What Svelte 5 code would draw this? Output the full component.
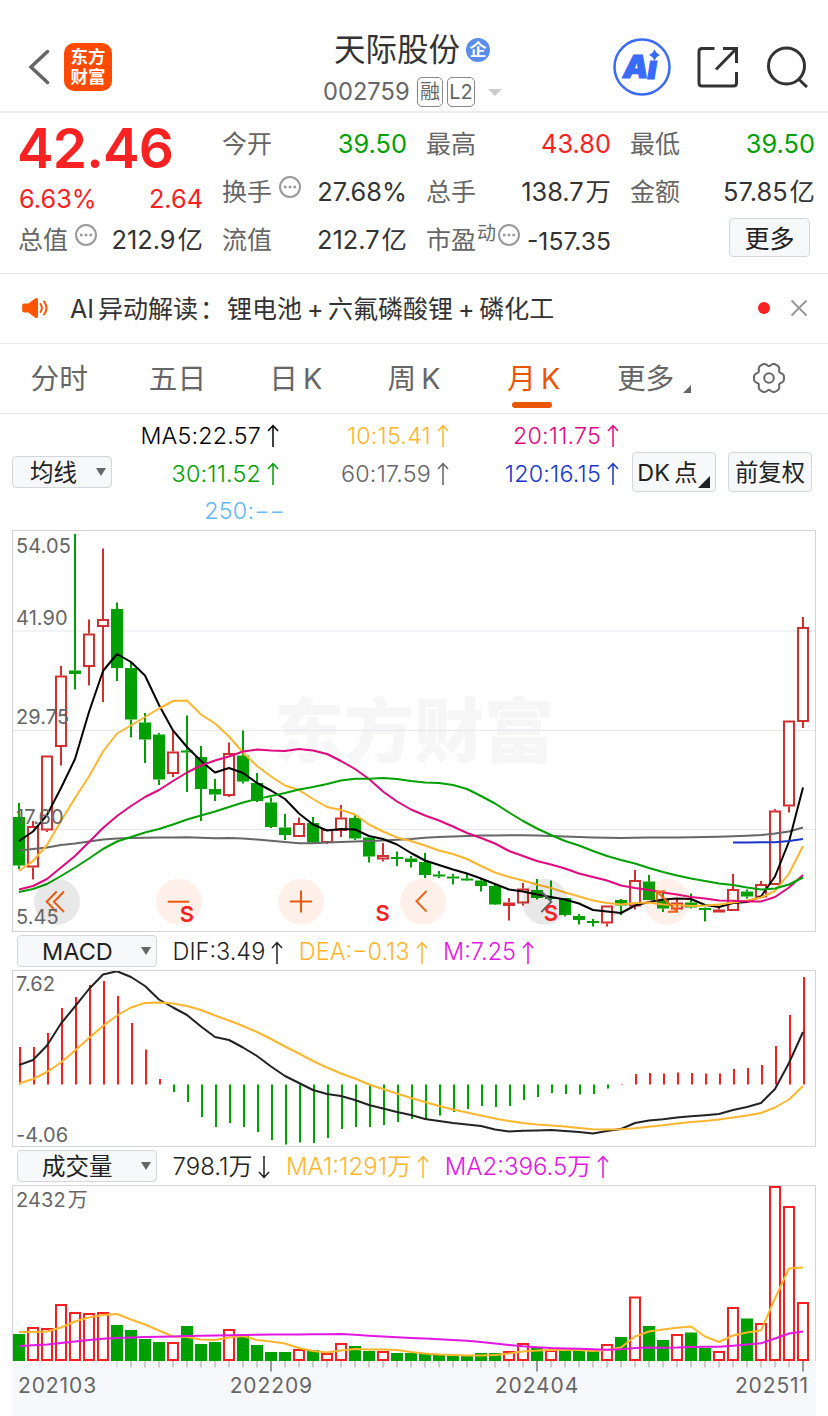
<script lang="ts">
	type Candle = [string, number, number, number, number];

	const step = 14;
	const firstX = 19;

	const tabs = ['分时', '五日', '日 K', '周 K', '月 K', '更多'];
	const activeTab = '月 K';

	const averages = [
		{ text: 'MA5:22.57', color: '#000000', arrow: true },
		{ text: '10:15.41', color: '#ffb62e', arrow: true },
		{ text: '20:11.75', color: '#e0097f', arrow: true },
		{ text: '30:11.52', color: '#00a000', arrow: true },
		{ text: '60:17.59', color: '#666666', arrow: true },
		{ text: '120:16.15', color: '#1a35c8', arrow: true },
		{ text: '250:−−', color: '#63b8f7', arrow: false }
	];

	// direction, high, body top, body bottom, low
	const candles: Candle[] = [
		['g', 803, 817, 865.5, 869],
		['r', 821, 826, 867.5, 879.5],
		['r', 755.5, 755.5, 830.5, 832],
		['r', 666, 675.5, 747, 765.5],
		['g', 534, 670.5, 674, 689.5],
		['r', 619.5, 633.5, 667, 685.5],
		['r', 548.5, 619, 627, 702],
		['g', 602.5, 609, 668, 681],
		['g', 662, 668, 719.5, 737.5],
		['g', 713, 722.5, 739.5, 763],
		['g', 733, 734.5, 779.5, 785],
		['r', 731, 751.5, 774, 777],
		['g', 715.5, 750.5, 752.5, 792],
		['g', 746, 757, 789, 821],
		['g', 779, 789, 794.5, 801],
		['r', 742.5, 753, 796, 797],
		['g', 730.5, 755.5, 781.5, 783.5],
		['g', 773, 783, 801, 802],
		['g', 797.5, 802.5, 827, 828],
		['g', 814, 827.5, 835, 840],
		['r', 817.5, 823, 837, 837],
		['g', 817, 823, 842.5, 843],
		['r', 829, 829, 843, 844],
		['r', 805, 817.5, 831, 837],
		['g', 815, 818, 838.5, 840],
		['g', 837.5, 837.5, 856.5, 862.5],
		['r', 843, 855, 859.5, 861.5],
		['g', 851.5, 857, 859, 866],
		['g', 856, 858.5, 862, 867.5],
		['g', 853, 862, 875, 878],
		['g', 871, 874.5, 876.5, 878],
		['g', 874, 876.5, 878.5, 884.5],
		['g', 873, 878.5, 880.5, 881],
		['g', 879, 880.5, 886, 891.5],
		['g', 885, 886, 904.5, 905],
		['r', 898, 902.5, 906, 920.5],
		['r', 883, 888.5, 903.5, 905.5],
		['g', 879, 890, 898, 899.5],
		['g', 880.5, 897, 899, 900],
		['g', 898, 898, 915, 916.5],
		['g', 914, 916, 920, 924.5],
		['g', 919, 921, 923, 926.5],
		['r', 905.5, 905.5, 923.5, 926.5],
		['g', 899, 900, 905.5, 915],
		['r', 870, 880, 906.5, 909.5],
		['g', 875, 881.5, 900, 900],
		['g', 890.5, 900, 908.5, 912],
		['r', 899, 902.5, 909.5, 910.5],
		['g', 893.5, 902.5, 907.5, 908.5],
		['g', 907.5, 908, 910, 921.5],
		['r', 907.5, 909.5, 912.5, 912.5],
		['r', 874, 889, 911, 911],
		['g', 889.5, 891.5, 896.5, 898.5],
		['r', 881, 884, 897.5, 897.5],
		['r', 809, 810.5, 885, 885],
		['r', 720.5, 720.5, 806.5, 812.5],
		['r', 617, 627, 722, 728]
	];

	const priceLines = [
		{
			color: '#666666',
			start: 0,
			y: [
				850.5, 849, 847.5, 845, 843.5, 841.5, 839.5, 838.5, 838, 837.7, 837.5, 837.5, 837.3, 837.8, 838.3, 838,
				838.5, 839.5, 840.7, 842, 843.2, 843.2, 842.6, 842, 841.5, 841, 840.4, 839.7, 839, 837.7, 837, 836.5, 836,
				835.6, 835.4, 835.3, 835.3, 835.6, 836, 836.5, 837, 837.4, 837.7, 838, 837.7, 837.6, 837.5, 837.4, 837.2,
				837, 836.7, 836.2, 835.7, 835, 833.5, 831.5, 827.5
			]
		},
		{
			color: '#000000',
			start: 0,
			y: [
				841, 831.5, 815, 788, 759, 712, 671, 654, 662, 675.5, 705, 730.5, 747, 761, 772.5, 768, 773, 783, 790.5,
				799, 813.5, 824.5, 830.5, 829, 829.5, 836, 839, 844.5, 853, 860.5, 865, 869.5, 873.5, 878.5, 884, 889.5,
				891.5, 894.5, 897, 899.5, 903.5, 910, 911.5, 913, 905.5, 902, 899.5, 898.5, 899, 905, 907, 903, 902, 896.5,
				876.5, 841.5, 787.5
			]
		},
		{
			color: '#ffb62e',
			start: 0,
			y: [
				871, 861, 845, 821, 798, 776.5, 751.5, 733.5, 725.5, 717, 708.5, 701, 700.5, 714.5, 723.5, 736.5, 752.5,
				766, 776.5, 785.5, 790, 799, 807, 810, 814.5, 824.5, 831.5, 837.5, 841, 845.5, 850.5, 854, 859, 866, 872.5,
				877, 880.5, 884.5, 888, 892.5, 896.5, 900.5, 903, 904.5, 903, 902.5, 904.5, 905, 906, 905.5, 904.5, 902.5,
				900.5, 897.5, 891, 873.5, 846
			]
		},
		{
			color: '#e0097f',
			start: 0,
			y: [
				889.5, 886, 879, 867.5, 856, 842, 828, 816, 806, 797, 790, 781, 772.5, 765.5, 760.5, 756.5, 751.5, 749.5,
				750.5, 751, 749, 750.5, 754, 761, 769, 779, 791.5, 801.5, 809.5, 815.5, 820.5, 826.5, 833, 838, 843.5, 851,
				856, 861, 864.5, 868.5, 873.5, 877, 880.5, 885.5, 888, 890, 892.5, 894.5, 897, 898.5, 900.5, 900.7, 901.5,
				901.5, 897, 887.5, 875
			]
		},
		{
			color: '#00a000',
			start: 0,
			y: [
				892, 889, 884, 876, 867.5, 858.5, 849, 841.5, 837, 832.5, 829, 824.5, 819.5, 815.5, 811.5, 807, 802.5, 799,
				796, 793, 789.5, 787, 784, 780.5, 778.7, 778.8, 778, 779, 781, 782.5, 783, 785, 789, 796, 803.5, 812.5, 821,
				828.5, 835, 841, 845.5, 851, 856, 860, 863.5, 868, 872, 875.5, 878.5, 881, 883.5, 885, 887.5, 889.5, 888.5,
				884.5, 877.5
			]
		},
		{ color: '#1a35c8', start: 51, y: [842.5, 842.5, 842.3, 842.2, 841, 839] }
	];

	const macdZero = 1084.5;
	const macdBars = [
		1047, 1047, 1033, 1008, 997, 985, 981, 996, 1023, 1049.5, 1079, 1092, 1102, 1117, 1127, 1123, 1127, 1132, 1140,
		1144.5, 1142.5, 1143, 1138, 1129, 1127, 1127, 1125, 1122, 1119, 1119, 1115.5, 1112, 1109, 1106, 1107, 1106, 1100,
		1097, 1093, 1094, 1094.5, 1094, 1088.5, 1084, 1074, 1073, 1073.5, 1072.5, 1073, 1073.5, 1073.5, 1069, 1068, 1065,
		1046, 1015, 977
	];

	const macdLines = [
		{
			color: '#222222',
			start: 0,
			y: [
				1065, 1060, 1045.5, 1023.5, 1006.5, 989, 974.5, 971.3, 977, 986, 999.5, 1007.5, 1015, 1026.5, 1037, 1040,
				1047.5, 1056, 1066.5, 1076, 1083, 1090, 1094, 1096, 1100, 1105, 1108.5, 1112, 1115, 1119, 1121, 1123,
				1124.5, 1126, 1129.5, 1131.5, 1130.7, 1130.5, 1130, 1131, 1132, 1133.5, 1131, 1129, 1123, 1120.5, 1119.3,
				1117.5, 1116.3, 1115.3, 1114, 1110, 1107, 1103, 1089, 1063, 1032
			]
		},
		{
			color: '#ffb62e',
			start: 0,
			y: [
				1083.5, 1079, 1072, 1062.5, 1050.5, 1038, 1026, 1015.5, 1007.5, 1003, 1002.5, 1003.5, 1006, 1010, 1015.5,
				1020.5, 1026, 1032, 1039, 1046.5, 1053.5, 1061, 1067.5, 1073.5, 1078.5, 1084.5, 1089, 1093.5, 1098, 1102,
				1106, 1109.5, 1112.5, 1115.5, 1118.5, 1121, 1123, 1124.5, 1125.5, 1126.5, 1128, 1129.3, 1129.6, 1129.3,
				1128.3, 1126.7, 1125.3, 1123.6, 1122, 1121, 1119.5, 1117.5, 1115.5, 1113, 1107.5, 1099.5, 1086
			]
		}
	];

	const volumeBase = 1361;
	const volumeColors = 'grrrrrrggggrgggrggggrgrrggrggggggggrrgrgggrgrggrggrrgrrrr';
	const volumes = [
		1334, 1327, 1328, 1304, 1312, 1313, 1312, 1325, 1330, 1339, 1342, 1342, 1326, 1344, 1342, 1329, 1335, 1345, 1352,
		1352, 1349, 1350, 1353, 1343, 1346, 1351, 1351, 1353, 1353, 1353, 1355, 1355.5, 1355, 1353, 1353, 1351, 1343,
		1348, 1350, 1351, 1350, 1351, 1344, 1337, 1296.5, 1326, 1340, 1334, 1332.5, 1348, 1351, 1307, 1318.5, 1323, 1186,
		1206, 1302
	];

	const volumeLines = [
		{
			color: '#ffb62e',
			start: 0,
			y: [
				1332, 1332, 1331.5, 1327.5, 1321.5, 1317.5, 1315, 1314, 1319.5, 1324.5, 1330.5, 1336.5, 1337, 1339.5, 1340,
				1337.5, 1336, 1340, 1341.5, 1343.5, 1348, 1351, 1352.5, 1350.5, 1349, 1349.5, 1349.5, 1350, 1352, 1353.5,
				1354.5, 1355, 1355.5, 1355.5, 1355, 1353.5, 1351.5, 1350.5, 1350, 1349.7, 1350, 1351, 1350, 1347.5, 1336.5,
				1331.5, 1329.5, 1327.7, 1326.5, 1336.5, 1342, 1335.5, 1332.5, 1330.5, 1298.5, 1268.5, 1267.5
			]
		},
		{
			color: '#e316e3',
			start: 0,
			y: [
				1346, 1345.2, 1344.5, 1343, 1341.5, 1340, 1338.7, 1338, 1337.5, 1337, 1336.7, 1336.4, 1336, 1335.8, 1335.5,
				1335.3, 1335, 1334.8, 1334.6, 1334.5, 1334.4, 1334.3, 1334.2, 1334, 1334.8, 1335.7, 1336.5, 1337.3, 1338,
				1338.6, 1339.2, 1340, 1340.8, 1342, 1343.5, 1345, 1346.3, 1347.2, 1348, 1348.4, 1348.7, 1349.2, 1349.7,
				1349.3, 1348, 1347.6, 1347.7, 1347.5, 1346.9, 1346.8, 1346.8, 1345.7, 1344.5, 1343.3, 1338.5, 1333.5, 1331.5
			]
		}
	];

	const priceLabels = [
		{ text: '54.05', y: 552.7 },
		{ text: '41.90', y: 624.6 },
		{ text: '29.75', y: 724.4 },
		{ text: '17.60', y: 823.7 },
		{ text: '5.45', y: 923.6 }
	];

	const controls = [
		{ x: 57, muted: true, stroke: '#e95a0c', d: 'M56.7 891.5l-10 10.3 10 10.3M64 891.5l-10 10.3 10 10.3' },
		{ x: 179, muted: false, stroke: '#e95a0c', d: 'M167.7 901.7h21.6' },
		{ x: 301, muted: false, stroke: '#e95a0c', d: 'M290 901.5h22M301 890.5v22' },
		{ x: 423, muted: false, stroke: '#f26419', d: 'M426.5 891l-10 10.3 10 10.3' },
		{ x: 545, muted: true, stroke: '#666666', d: 'M541.3 891.5l10 10.3-10 10.3' },
		{ x: 667, muted: false, stroke: '#f26419', d: 'M665.5 891.5h-8.6v9M657 891.5l20 20M668 911.7h9v-9' }
	];

	const signals = [
		{ x: 187, y: 921.5 },
		{ x: 382.6, y: 921.2 },
		{ x: 551, y: 921.2 }
	];

	const dates = [
		{ text: '202103', x: 18, anchor: 'start' },
		{ text: '202209', x: 271.3, anchor: 'middle' },
		{ text: '202404', x: 537, anchor: 'middle' },
		{ text: '202511', x: 809, anchor: 'end' }
	];

	// six-lobed outline of the settings gear
	const gear = Array.from({ length: 120 }, (_, i) => {
		const a = (i * Math.PI) / 60;
		const r = 13.9 + 1.5 * Math.cos(6 * a) - 0.45 * Math.cos(12 * a);
		return `${(r * Math.cos(a)).toFixed(2)},${(r * Math.sin(a)).toFixed(2)}`;
	}).join(' ');

	function xAt(i: number) {
		return firstX + i * step;
	}

	function points(line: { start: number; y: number[] }) {
		return line.y.map((y, i) => `${xAt(i + line.start)},${y}`).join(' ');
	}

	function candleColor(kind: string) {
		return kind === 'r' ? '#d03030' : '#00a000';
	}
</script>

{#snippet arrow(flipped: boolean)}
	<svg class="arrow" class:flipped viewBox="0 0 12 24" width="12" height="24">
		<path d="M6 23V1.5M1 7l5-5.5L11 7" />
	</svg>
{/snippet}

{#snippet dots()}
	<svg class="dots" viewBox="0 0 22 22" width="22" height="22">
		<circle cx="11" cy="11" r="10" />
		<path d="M5 9.7h2.6v2.6H5zM9.7 9.7h2.6v2.6H9.7zM14.4 9.7h2.6v2.6h-2.6z" />
	</svg>
{/snippet}

<div class="page">
	<header class="header">
		<svg class="back" viewBox="0 0 22 36" width="22" height="36">
			<path d="M19.5 2.5L3 18l16.5 15.5" />
		</svg>
		<div class="logo"><span>东方</span><span>财富</span></div>
		<div class="stock">
			<div class="stock-name">天际股份<span class="corp">企</span></div>
			<div class="stock-code">
				<span class="code">002759</span>
				<span class="tag">融</span>
				<span class="tag level">L2</span>
				<i class="caret"></i>
			</div>
		</div>
		<svg class="ai" viewBox="0 0 58 58" width="58" height="58">
			<circle cx="29" cy="29" r="27.5" />
			<text x="10" y="39.5">A</text>
			<text x="34.5" y="40.5">ı</text>
			<path d="M41.5 11q1.4 4.400 5.600 5.900-4.200 1.500-5.600 5.900-1.400-4.400-5.600-5.900 4.200-1.500 5.600-5.900z" />
		</svg>
		<svg class="share" viewBox="0 0 42 42" width="42" height="42">
			<path d="M17.5 2.5H5q-3 0-3 3V37q0 3 3 3h31.5q3 0 3-3V26M26 2.5h13.5V17M39.5 2.5L19 23.5" />
		</svg>
		<svg class="search" viewBox="0 0 42 42" width="42" height="42">
			<circle cx="20.5" cy="20" r="18" />
			<path d="M32.5 33l8.5 8" />
		</svg>
	</header>

	<section class="quote">
		<div class="column">
			<div class="price">42.46</div>
			<div class="change"><span>6.63%</span><span>2.64</span></div>
			<div class="row">
				<span class="label">总值</span>{@render dots()}<span class="value">212.9<b>亿</b></span>
			</div>
		</div>
		<div class="column">
			<div class="row"><span class="label">今开</span><span class="value down">39.50</span></div>
			<div class="row">
				<span class="label">换手</span>{@render dots()}<span class="value">27.68%</span>
			</div>
			<div class="row"><span class="label">流值</span><span class="value">212.7<b>亿</b></span></div>
		</div>
		<div class="column">
			<div class="row"><span class="label">最高</span><span class="value up">43.80</span></div>
			<div class="row"><span class="label">总手</span><span class="value">138.7<b>万</b></span></div>
			<div class="row pe">
				<span class="label">市盈</span><span class="sup">动</span>{@render dots()}<span class="value">-157.35</span>
			</div>
		</div>
		<div class="column">
			<div class="row"><span class="label">最低</span><span class="value down">39.50</span></div>
			<div class="row"><span class="label">金额</span><span class="value">57.85<b>亿</b></span></div>
			<div class="row"><button class="more">更多</button></div>
		</div>
	</section>

	<section class="news">
		<svg class="speaker" viewBox="0 0 26 22" width="26" height="22">
			<path
				class="horn"
				d="M2 6.5h4.5L13 1.5q3-1.5 3 1.5v16q0 3-3 1.5L6.5 15.5H2q-1.8 0-1.8-1.8V8.3q0-1.8 1.8-1.8z"
			/>
			<path class="wave" d="M18.5 7q2.8 4 0 8M22 4.5q5 6.5 0 13" />
		</svg>
		<span class="headline">
			<i>AI</i>异动解读<i class="colon">：</i>锂电池<i class="plus">+</i>六氟磷酸锂<i class="plus">+</i>磷化工
		</span>
		<span class="unread"></span>
		<svg class="close" viewBox="0 0 18 18" width="18" height="18">
			<path d="M1.5 1.5l15 15M16.5 1.5l-15 15" />
		</svg>
	</section>

	<nav class="tabs">
		{#each tabs as tab}
			<div class="tab" class:active={tab === activeTab} class:with-corner={tab === '更多'}>
				<span>{tab}</span>{#if tab === '更多'}<i class="corner"></i>{/if}
			</div>
		{/each}
		<div class="tab">
			<svg class="gear" viewBox="-17 -17 34 34" width="34" height="34">
				<polygon points={gear} />
				<circle r="4.8" />
			</svg>
		</div>
	</nav>

	<section class="legend">
		<button class="select ma">均线<i></i></button>
		<div class="averages">
			{#each averages as item}
				<span style="color: {item.color}">{item.text}{#if item.arrow}{@render arrow(false)}{/if}</span>
			{/each}
		</div>
		<button class="option dk">DK 点<i></i></button>
		<button class="option">前复权</button>
	</section>

	<svg class="panel" viewBox="12 530 804 402" width="804" height="402">
		<text class="watermark" x="274" y="757">东方财富</text>
		{#each [631, 730.5, 829.5] as y}
			<path class="grid" d="M12 {y}H816" />
		{/each}
		{#each candles as [kind, high, top, bottom, low], i}
			<g stroke={candleColor(kind)} fill={kind === 'r' ? '#ffffff' : '#00a000'}>
				<path stroke-width="2" d="M{xAt(i)} {high}V{top}M{xAt(i)} {bottom}V{low}" />
				{#if kind === 'r'}
					<rect x={xAt(i) - 5} y={top + 1} width="10" height={bottom - top - 2} stroke-width="2" />
				{:else}
					<rect x={xAt(i) - 6} y={top} width="12" height={bottom - top} stroke="none" />
				{/if}
			</g>
		{/each}
		{#each priceLines as line}
			<polyline class="line" stroke={line.color} points={points(line)} />
		{/each}
		{#each controls as control}
			<circle class="control" class:muted={control.muted} cx={control.x} cy="901.7" r="23" />
			<path class="glyph" stroke={control.stroke} d={control.d} />
		{/each}
		{#each signals as signal}
			<text class="signal" x={signal.x} y={signal.y}>S</text>
		{/each}
		{#each priceLabels as label}
			<text class="scale" x="16" y={label.y}>{label.text}</text>
		{/each}
		<rect class="frame" x="12.5" y="530.5" width="803" height="401" />
	</svg>

	<section class="indicator">
		<button class="select">MACD<i></i></button>
		<span style="color: #222222">DIF:3.49{@render arrow(false)}</span>
		<span style="color: #ffb62e">DEA:−0.13{@render arrow(false)}</span>
		<span style="color: #e316e3">M:7.25{@render arrow(false)}</span>
	</section>

	<svg class="panel" viewBox="12 970 804 177" width="804" height="177">
		{#each macdBars as y, i}
			<path
				stroke={y < macdZero ? '#f22020' : '#00a000'}
				stroke-width="2"
				d="M{xAt(i) + 1} {macdZero}V{y}"
			/>
		{/each}
		{#each macdLines as line}
			<polyline class="line" stroke={line.color} points={points(line)} />
		{/each}
		<text class="scale" x="16" y="991">7.62</text>
		<text class="scale" x="16" y="1141.5">-4.06</text>
		<rect class="frame" x="12.5" y="970.5" width="803" height="176" />
	</svg>

	<section class="indicator volume">
		<button class="select">成交量<i></i></button>
		<span style="color: #222222">798.1万{@render arrow(true)}</span>
		<span style="color: #ffb62e">MA1:1291万{@render arrow(false)}</span>
		<span style="color: #e316e3">MA2:396.5万{@render arrow(false)}</span>
	</section>

	<svg class="panel" viewBox="12 1185 804 231" width="804" height="231">
		<path class="frame" d="M12.5 1361V1185.5H815.5V1361" />
		<rect class="axis" x="12" y="1361" width="804" height="55" />
		{#each volumes as y, i}
			{#if volumeColors[i] === 'r'}
				<rect
					x={xAt(i) - 5}
					y={y + 1}
					width="10"
					height={volumeBase - y - 2}
					fill="#ffffff"
					stroke="#f22020"
					stroke-width="2"
				/>
			{:else}
				<rect x={xAt(i) - 6} {y} width="12" height={volumeBase - y} fill="#00a000" />
			{/if}
			{#if i >= 7}
				{@const major = (i - 18) % 19 === 0}
				<path class="tick" class:major class:faint={i === 7} d="M{xAt(i)} 1361v{major ? 10.5 : 6.5}" />
			{/if}
		{/each}
		{#each volumeLines as line}
			<polyline class="line" stroke={line.color} points={points(line)} />
		{/each}
		<text class="scale" x="16" y="1206.6">2432<tspan dx="2">万</tspan></text>
		{#each dates as date}
			<text class="date" x={date.x} y="1392.5" text-anchor={date.anchor}>{date.text}</text>
		{/each}
	</svg>
</div>

<style>
	:global(body) {
		background: #ffffff;
	}

	.page {
		width: 828px;
		height: 1416px;
		overflow: hidden;
		font-family: Inter, 'Noto Sans CJK SC', sans-serif;
		font-size: 25px;
		line-height: 1.2;
		color: #333333;
		white-space: nowrap;
	}

	svg {
		display: block;
		flex: none;
		fill: none;
	}

	button {
		font: inherit;
		color: #222222;
		padding: 0;
		box-sizing: border-box;
		background: #f7f8fa;
		border: 1px solid #d3d6db;
		border-radius: 4px;
	}

	i {
		font-style: normal;
	}

	.header {
		display: flex;
		height: 113px;
		box-sizing: border-box;
		padding: 22px 0 0 28px;
		border-bottom: 2px solid #ececec;
		align-items: center;
	}

	.back path {
		stroke: #666666;
		stroke-width: 3.5;
		stroke-linecap: round;
	}

	.logo {
		display: flex;
		flex-direction: column;
		align-items: center;
		justify-content: center;
		width: 48px;
		height: 48px;
		margin-left: 14px;
		border-radius: 10px;
		background: #ff4a00;
		color: #ffffff;
		font-size: 17.5px;
		font-weight: 700;
		line-height: 19.5px;
	}

	.stock {
		width: 290px;
		margin-left: 211px;
		padding-top: 9px;
	}

	.stock-name {
		display: flex;
		align-items: center;
		height: 42px;
		padding-left: 11px;
		font-size: 31.5px;
	}

	.corp {
		width: 24px;
		height: 24px;
		margin-left: 6px;
		border-radius: 50%;
		background: #5b8def;
		color: #ffffff;
		font-size: 17px;
		font-weight: 700;
		line-height: 24px;
		text-align: center;
	}

	.stock-code {
		display: flex;
		align-items: center;
		height: 42px;
		color: #666666;
	}

	.code {
		width: 94px;
		font-size: 23.7px;
	}

	.tag {
		width: 24px;
		height: 28px;
		margin-right: 4px;
		border: 1px solid #888888;
		border-radius: 5px;
		font-size: 20px;
		line-height: 28px;
		text-align: center;
	}

	.tag.level {
		width: 26px;
	}

	.caret {
		margin-left: 9px;
		border: 7px solid transparent;
		border-top-color: #cccccc;
		border-bottom: 0;
	}

	.ai circle {
		stroke: #3a6af8;
		stroke-width: 2.5;
	}

	.ai path,
	.ai text {
		fill: #3a6af8;
		font-size: 32px;
		font-weight: 900;
		font-style: italic;
	}

	.ai text {
		stroke: #3a6af8;
		stroke-width: 1.2;
	}

	.share {
		margin-left: 26px;
	}

	.search {
		margin-left: 27px;
	}

	.share path,
	.search circle,
	.search path {
		stroke: #333333;
		stroke-width: 3;
	}

	.quote {
		display: grid;
		grid-template-columns: repeat(4, 184px);
		column-gap: 20px;
		height: 160px;
		padding: 7px 13px 0 19px;
		box-sizing: border-box;
	}

	.row {
		display: flex;
		align-items: center;
		height: 48px;
	}

	.label {
		margin-left: -1px;
		color: #666666;
	}

	.value {
		margin-left: auto;
		font-size: 25.4px;
	}

	.value b {
		margin-left: 2px;
		font-weight: 400;
	}

	.up {
		color: #f82222;
	}

	.down {
		color: #00a000;
	}

	.price {
		height: 56px;
		margin-left: -2px;
		color: #f82222;
		font-size: 55px;
		font-weight: 600;
		letter-spacing: -0.8px;
		line-height: 56px;
	}

	.change {
		display: flex;
		justify-content: space-between;
		height: 40px;
		color: #f82222;
		font-size: 25.3px;
		line-height: 46px;
	}

	.dots {
		margin: -10px 0 0 7px;
	}

	.dots circle {
		stroke: #999999;
		stroke-width: 2;
	}

	.dots path {
		fill: #999999;
	}

	.sup {
		margin: -12px 0 0 1px;
		color: #666666;
		font-size: 19px;
	}

	.pe .dots {
		margin-left: 2px;
	}

	.pe .value {
		margin-top: 3px;
		font-size: 24.7px;
	}

	.more {
		width: 81px;
		height: 39px;
		margin: -5px 5px 0 auto;
		padding-top: 2px;
	}

	.news {
		display: flex;
		align-items: center;
		height: 71px;
		box-sizing: border-box;
		padding: 0 20px 0 22px;
		border-top: 1px solid #e8e8e8;
		border-bottom: 1px solid #e8e8e8;
	}

	.speaker,
	.close {
		margin-top: -2px;
	}

	.horn {
		fill: #ff5500;
	}

	.wave {
		stroke: #ff5500;
		stroke-width: 2;
		stroke-linecap: round;
	}

	.headline {
		margin-left: 22px;
	}

	.headline i {
		margin-right: 4px;
	}

	.headline .colon {
		margin: 0 2px;
	}

	.headline .plus {
		margin: 0 4.5px 0 5px;
	}

	.unread {
		width: 12px;
		height: 12px;
		margin: -2px 20px 0 auto;
		border-radius: 50%;
		background: #f82222;
	}

	.close path {
		stroke: #999999;
		stroke-width: 2;
	}

	.tabs {
		display: grid;
		grid-template-columns: repeat(7, 1fr);
		height: 70px;
		box-sizing: border-box;
		border-bottom: 1px solid #e8e8e8;
		color: #666666;
		font-size: 28.7px;
		word-spacing: -3px;
	}

	.tab {
		position: relative;
		display: flex;
		align-items: center;
		justify-content: center;
	}

	.tab span {
		padding-top: 2px;
	}

	.active {
		color: #ea5504;
	}

	.active span {
		padding-left: 3px;
	}

	.active::after {
		content: '';
		position: absolute;
		left: 39px;
		bottom: 5px;
		width: 40px;
		height: 6px;
		border-radius: 3px;
		background: #ea5504;
	}

	.with-corner {
		padding-left: 7px;
	}

	.corner {
		margin: 20px 0 0 9px;
		border: 4px solid #666666;
		border-top-color: transparent;
		border-left-color: transparent;
	}

	.gear {
		margin-top: -1px;
	}

	.gear polygon,
	.gear circle {
		stroke: #666666;
		stroke-width: 2;
		stroke-linejoin: round;
	}

	.legend {
		display: flex;
		align-items: center;
		height: 116px;
		padding: 0 16px 0 12px;
	}

	.select {
		display: flex;
		align-items: center;
		justify-content: space-between;
		flex: none;
		width: 140px;
		height: 32px;
		padding: 2px 5px 0 24px;
		font-size: 23.5px;
	}

	.select.ma {
		width: 100px;
		padding-left: 17px;
	}

	.select i {
		margin-top: -2px;
		border: 5px solid transparent;
		border-top: 8px solid #666666;
		border-bottom: 0;
	}

	.averages {
		display: grid;
		grid-template-columns: 167px 170px 170px;
		grid-template-rows: 38px 38px 37px;
		margin-top: 2px;
		font-size: 23.3px;
		font-weight: 350;
		letter-spacing: 0.2px;
	}

	.averages span {
		display: flex;
		align-items: center;
		justify-content: flex-end;
	}

	.averages span:last-child {
		margin-right: -6px;
	}

	.arrow {
		margin-left: 6px;
	}

	.arrow path {
		stroke: currentColor;
		stroke-width: 1.5;
	}

	.arrow.flipped {
		transform: rotate(180deg);
	}

	.option {
		width: 84px;
		height: 40px;
		margin-left: 12px;
		padding-top: 2px;
		font-size: 23.3px;
		word-spacing: -2px;
	}

	.option.dk {
		position: relative;
		margin-left: 13px;
		padding-right: 13px;
	}

	.dk i {
		position: absolute;
		right: 5px;
		bottom: 3px;
		border: 6px solid #222222;
		border-top-color: transparent;
		border-left-color: transparent;
	}

	.panel {
		margin-left: 12px;
	}

	.frame {
		stroke: #d3d3d9;
	}

	.grid {
		stroke: #e6e8f0;
	}

	.watermark {
		fill: #f6f6f6;
		font-size: 70px;
		font-weight: 900;
	}

	.line {
		stroke-width: 2;
		stroke-linejoin: round;
	}

	.control {
		fill: #ff5a14;
		fill-opacity: 0.09;
	}

	.control.muted {
		fill: #000000;
		fill-opacity: 0.09;
	}

	.glyph {
		stroke-width: 2;
	}

	.signal {
		fill: #f82222;
		font-size: 22px;
		font-weight: 600;
		text-anchor: middle;
	}

	.scale {
		fill: #666666;
		font-size: 20px;
		letter-spacing: 0.1px;
	}

	.indicator {
		display: flex;
		align-items: center;
		height: 38px;
		padding-left: 17px;
	}

	.indicator span {
		display: flex;
		align-items: center;
		margin: 3px 0 0 15.5px;
		font-size: 23.5px;
		font-weight: 350;
	}

	.indicator.volume span {
		font-size: 24px;
	}

	.axis {
		fill: #f7f8fb;
	}

	.tick {
		stroke: #cccccc;
		stroke-width: 2;
	}

	.tick.major {
		stroke: #999999;
	}

	.tick.faint {
		opacity: 0.5;
	}

	.date {
		fill: #666666;
		font-size: 21px;
		letter-spacing: 0.9px;
	}
</style>
